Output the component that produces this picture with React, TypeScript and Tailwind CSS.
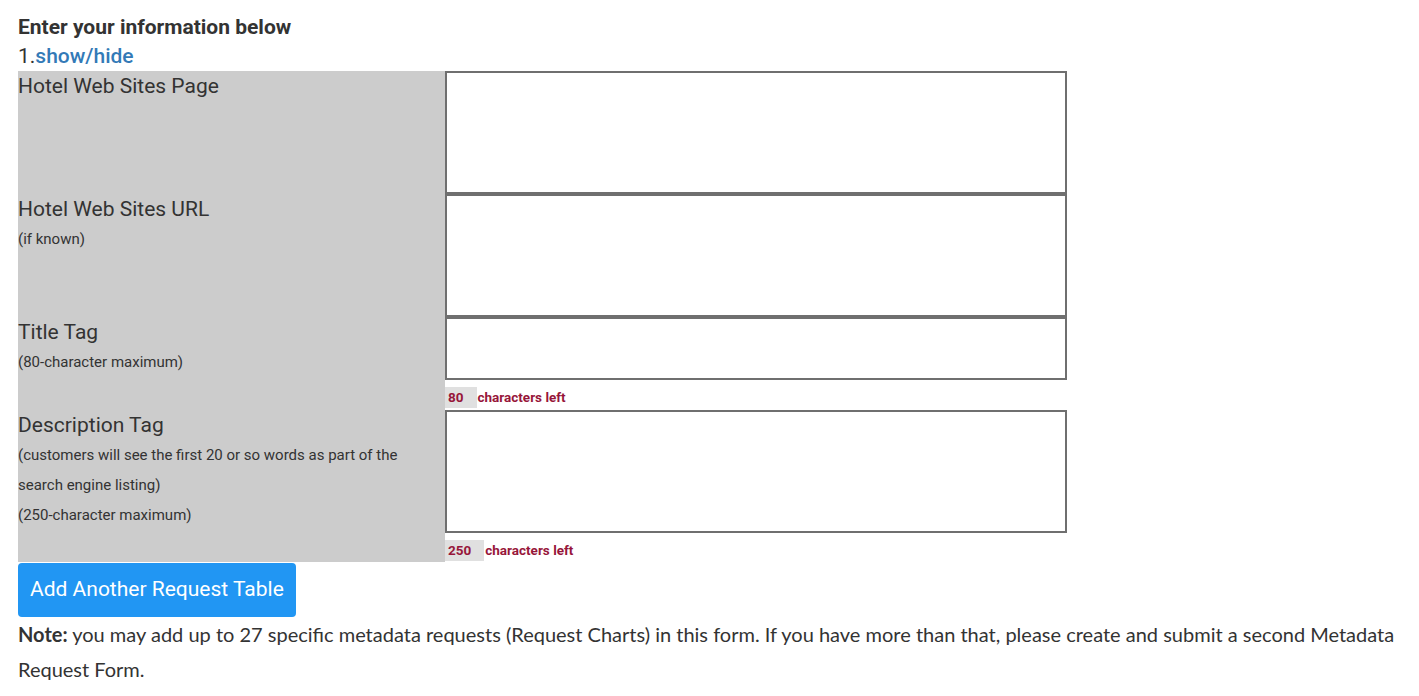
import React from "react";

const rows = [
    { label: "Hotel Web Sites Page", notes: [], kind: "area" as const },
    { label: "Hotel Web Sites URL", notes: ["(if known)"], kind: "area" as const },
    { label: "Title Tag", notes: ["(80-character maximum)"], kind: "input" as const, max: 80 },
    {
        label: "Description Tag",
        notes: [
            "(customers will see the first 20 or so words as part of the",
            "search engine listing)",
            "(250-character maximum)",
        ],
        kind: "area" as const,
        max: 250,
    },
];

function Counter({ left }: { left: number }) {
    return (
        <div className="flex items-stretch pt-[7px] text-[13.5px] font-bold leading-[21px] text-[#97163a]">
            <span className="bg-[#e0e0e0] pl-[3px] pr-[13px]">{left}</span>
            <span className="ml-[1px]">characters left</span>
        </div>
    );
}

export default function App() {
    return (
        <main className="px-[18px] pt-3 text-[#333] font-['Roboto',sans-serif]">
            <h2 className="text-[21px] font-bold leading-[30px]">Enter your information below</h2>
            <div className="text-[21px] leading-[29px]">
                1.<a className="text-[#337ab7] font-medium cursor-pointer">show/hide</a>
            </div>

            {/* Request table */}
            <div className="flex flex-col">
                {rows.map((row) => (
                    <div key={row.label} className="grid grid-cols-[427px_622px]">
                        <div className="bg-[#cccccc]">
                            <div className="text-[21px] leading-[30px]">{row.label}</div>
                            {row.notes.map((n) => (
                                <div key={n} className="text-[15px] leading-[30px]">{n}</div>
                            ))}
                        </div>
                        <div className="flex flex-col">
                            {row.kind === "area" ? (
                                <textarea className="block h-[123px] w-[622px] resize-none border-2 border-[#6f6f6f] bg-white" />
                            ) : (
                                <input className="block h-[63px] w-[622px] border-2 border-[#6f6f6f] bg-white" />
                            )}
                            {row.max && (
                                <div className={row.max === 80 ? "pb-[2px]" : "pb-px"}>
                                    <Counter left={row.max} />
                                </div>
                            )}
                        </div>
                    </div>
                ))}
            </div>

            <button className="mt-px h-[54px] rounded-[4px] bg-[#2196f3] px-3 text-[21px] text-white">
                Add Another Request Table
            </button>

            <p className="text-[20px] leading-[35px] font-['Lato',sans-serif] text-[#333]">
                <b>Note:</b> you may add up to 27 specific metadata requests (Request Charts) in this form. If you have more than that, please create and submit a second Metadata Request Form.
            </p>
        </main>
    );
}
